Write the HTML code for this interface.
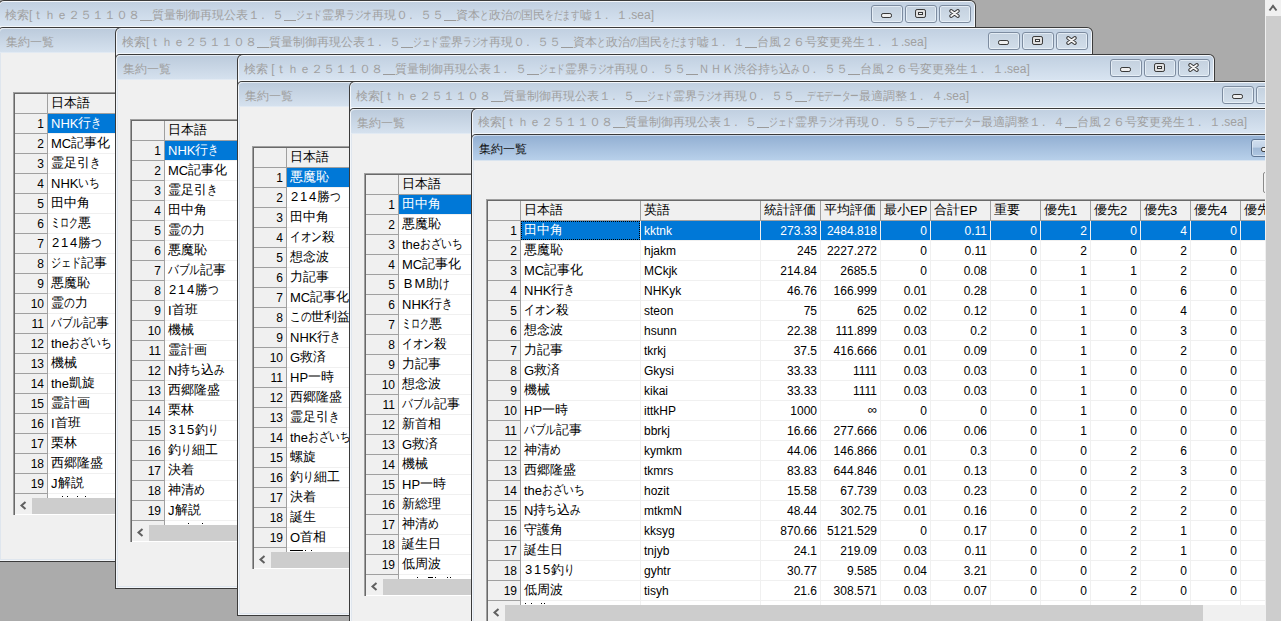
<!DOCTYPE html><html><head><meta charset="utf-8"><style>
*{margin:0;padding:0;box-sizing:border-box}
html,body{width:1281px;height:621px;overflow:hidden;background:#ababab;font-family:"Liberation Sans", sans-serif;}
.win{position:absolute;width:978px;height:562px;background:#3b3b3b;border-radius:6px 6px 0 0;overflow:hidden}
.w1{position:absolute;left:1px;top:1px;right:1px;bottom:1px;background:#f4f7fb;border-radius:5px 5px 0 0}
.w2{position:absolute;left:2px;top:2px;right:2px;bottom:2px;background:#dce4ee;border-radius:4px 4px 0 0}
.tb{position:absolute;left:2px;right:2px;top:2px;background:linear-gradient(#c1d0e1,#d8e4f1);border-radius:4px 4px 0 0}
.ttl{position:absolute;left:7px;font-size:12px;color:#a0a0a0;white-space:nowrap;line-height:14px}
.btn{position:absolute;width:32px;height:18px;border:1px solid #7d8ca0;border-radius:3px;background:linear-gradient(#c4d1df,#d2deea);box-shadow:inset 0 0 0 1px rgba(240,246,252,.7)}
.imin{position:absolute;left:9px;top:7px;width:11px;height:5px;background:linear-gradient(#fafafa,#dcdcdc);border:1px solid #3a3a3a;border-radius:2px}
.imax{position:absolute;left:9px;top:3px;width:11px;height:9px;background:#e4e4e4;border:1px solid #3a3a3a;border-radius:2px}
.imax:after{content:"";position:absolute;left:2px;top:2px;width:5px;height:3px;background:#f8f8f8;border:1px solid #3a3a3a}
.ic{position:absolute}
.tbl{position:absolute;left:2px;right:2px;height:1px;background:#f3f7fb}
.child{position:absolute;left:0;right:0;bottom:0;background:#3b3b3b;border-radius:5px 5px 0 0}
.c1{position:absolute;left:1px;right:1px;top:1px;bottom:1px;background:#f3f6fa;border-radius:4px 4px 0 0}
.c2{position:absolute;left:2px;right:2px;top:2px;bottom:2px;background:#dfe6ee}
.cap{position:absolute;left:2px;right:2px;top:1px;height:25px;background:linear-gradient(#bccbdc,#d5e1ee calc(100% - 1px),#e2eaf3 calc(100% - 1px));border-radius:4px 4px 0 0;border-top:1px solid #e4ebf3}
.cap.act{background:linear-gradient(#93b0d3,#b8d0ea calc(100% - 1px),#d9e4ef calc(100% - 1px));border-top:1px solid #c9d8ea}
.ctl{position:absolute;left:6px;top:6px;font-size:12px;color:#a0a0a0;line-height:14px;white-space:nowrap}
.cap.act .ctl{color:#111}
.k{display:inline-block;transform-origin:0 0}
.pd{display:inline-block;width:12px;padding-left:1px}
.m{font-size:13px;position:relative;top:-1px}
.fw{display:inline-block;text-align:center;font-size:13px;position:relative;top:-2px}
.j{font-size:13px;position:relative;top:-2px}
.u{display:inline-block;width:12px;height:1px;border-bottom:1px solid #9a9a9a;margin-left:0px;vertical-align:-2px}
.cont{position:absolute;left:3px;right:3px;top:26px;bottom:3px;background:#f0f0f0}
.grid{position:absolute;height:423px;background:#fff;overflow:hidden;font-size:12px;color:#000}
.gf1{position:absolute;left:0;top:0;right:0;height:1px;background:#a0a0a0}
.gf2{position:absolute;left:0;top:0;bottom:0;width:1px;background:#a0a0a0}
.gf3{position:absolute;left:1px;top:1px;right:0;height:1px;background:#696969}
.gf4{position:absolute;left:1px;top:1px;bottom:0;width:1px;background:#696969}
.hc{position:absolute;background:#f0f0f0;line-height:21px;white-space:nowrap;overflow:hidden;border-right:1px solid #a0a0a0;border-bottom:1px solid #a0a0a0}
.hc.t{padding-left:3px}
.rn{position:absolute;left:2px;width:33px;height:20px;background:#f0f0f0;line-height:21px;text-align:right;padding-right:3px;border-right:1px solid #a0a0a0;border-bottom:1px solid #a0a0a0}
.c{position:absolute;height:20px;line-height:21px;white-space:nowrap;overflow:hidden;padding-left:3px;border-right:1px solid #f0f0f0;border-bottom:1px solid #f0f0f0}
.c.r{text-align:right;padding-left:0;padding-right:3px}
.c.sel{background:#0078d7;color:#fff}
.c.foc:after{content:"";position:absolute;left:0;top:0;right:0;bottom:0;border:1px dotted #000}
.hsb{position:absolute;left:2px;top:406px;height:16px;background:#f0f0f0}
.arr{position:absolute;left:0;top:0;width:17px;height:16px}
.thumb{position:absolute;left:17px;top:0;height:16px;background:#cdcdcd}
.cbtn{position:absolute;width:32px;height:18px;border:1px solid #5f7694;border-radius:3px;background:linear-gradient(#d0deee 0,#c3d4e8 45%,#9fb8d5 50%,#b0c7e2 100%);box-shadow:inset 0 0 0 1px rgba(230,240,250,.6)}
.vsb{position:absolute;left:1265px;top:0;width:16px;height:621px;background:#f0f0f0}
.vth{position:absolute;left:1266px;top:16px;width:15px;height:605px;background:#cdcdcd}
.up{position:absolute;left:1265px;top:0px}
</style></head><body><div class="win" style="left:-2px;top:0px"><div class="w1"></div><div class="w2"></div><div class="tb" style="height:24px"></div><div class="tbl" style="top:26px"></div><div class="ttl" style="top:8px">検索[ｔｈｅ２５１１０８<span class="u"></span>質量制御再現公表１<span class="pd">.</span>５<span class="u"></span><span class="k" style="transform:scaleX(0.72);margin-right:-10.1px">ジェド</span>霊界<span class="k" style="transform:scaleX(0.72);margin-right:-10.1px">ラジオ</span>再現０<span class="pd">.</span>５５<span class="u"></span>資本<span class="k" style="transform:scaleX(0.72);margin-right:-3.4px">と</span>政治<span class="k" style="transform:scaleX(0.72);margin-right:-3.4px">の</span>国民<span class="k" style="transform:scaleX(0.72);margin-right:-13.4px">をだます</span>嘘１<span class="pd">.</span>１.sea]</div><div class="btn" style="left:873px;top:5px"><svg class="ic" style="left:9px;top:7px" width="11" height="5"><rect x="0.5" y="0.5" width="10" height="4" rx="1.6" fill="#efefef" stroke="#383838"/></svg></div><div class="btn" style="left:907px;top:5px"><svg class="ic" style="left:9px;top:3px" width="11" height="9"><rect x="0.5" y="0.5" width="10" height="8" rx="1.6" fill="#e0e0e0" stroke="#383838"/><rect x="3.5" y="3.5" width="4" height="2" fill="#f6f6f6" stroke="#383838"/></svg></div><div class="btn" style="left:941px;top:5px"><svg class="ic" style="left:9px;top:3px" width="11" height="9" viewBox="0 0 11 9"><path d="M2.2 2 L8.8 7 M8.8 2 L2.2 7" stroke="#383838" stroke-width="3.8" stroke-linecap="round"/><path d="M2.2 2 L8.8 7 M8.8 2 L2.2 7" stroke="#f2f2f2" stroke-width="1.9" stroke-linecap="round"/></svg></div><div class="child" style="top:27px"><div class="c1"></div><div class="c2"></div><div class="cap" style="height:25px"><div class="ctl">集約一覧</div></div><div class="cont" style="top:26px"></div></div><div class="grid" style="left:15px;top:92px;width:160px;"><div class="gf1"></div><div class="gf2"></div><div class="gf3"></div><div class="gf4"></div><div class="hc" style="left:2px;top:2px;width:33px;height:20px"></div><div class="hc t" style="left:35px;top:2px;width:120px;height:20px"><span class="j">日本語</span></div><div class="rn" style="top:22px">1</div><div class="c sel" style="left:35px;top:22px;width:120px"><span class="m">NHK</span><span class="j">行</span><span class="j k" style="transform:scaleX(0.82);margin-right:-2.3px">き</span></div><div class="rn" style="top:42px">2</div><div class="c" style="left:35px;top:42px;width:120px"><span class="m">MC</span><span class="j">記事化</span></div><div class="rn" style="top:62px">3</div><div class="c" style="left:35px;top:62px;width:120px"><span class="j">霊足引</span><span class="j k" style="transform:scaleX(0.82);margin-right:-2.3px">き</span></div><div class="rn" style="top:82px">4</div><div class="c" style="left:35px;top:82px;width:120px"><span class="m">NHK</span><span class="j k" style="transform:scaleX(0.82);margin-right:-4.7px">いち</span></div><div class="rn" style="top:102px">5</div><div class="c" style="left:35px;top:102px;width:120px"><span class="j">田中角</span></div><div class="rn" style="top:122px">6</div><div class="c" style="left:35px;top:122px;width:120px"><span class="j k" style="transform:scaleX(0.7);margin-right:-11.7px">ミロク</span><span class="j">悪</span></div><div class="rn" style="top:142px">7</div><div class="c" style="left:35px;top:142px;width:120px"><span class="fw" style="width:9px">2</span><span class="fw" style="width:9px">1</span><span class="fw" style="width:9px">4</span><span class="j">勝</span><span class="j k" style="transform:scaleX(0.82);margin-right:-2.3px">つ</span></div><div class="rn" style="top:162px">8</div><div class="c" style="left:35px;top:162px;width:120px"><span class="j k" style="transform:scaleX(0.78);margin-right:-8.6px">ジェド</span><span class="j">記事</span></div><div class="rn" style="top:182px">9</div><div class="c" style="left:35px;top:182px;width:120px"><span class="j">悪魔恥</span></div><div class="rn" style="top:202px">10</div><div class="c" style="left:35px;top:202px;width:120px"><span class="j">霊</span><span class="j k" style="transform:scaleX(0.82);margin-right:-2.3px">の</span><span class="j">力</span></div><div class="rn" style="top:222px">11</div><div class="c" style="left:35px;top:222px;width:120px"><span class="j k" style="transform:scaleX(0.82);margin-right:-7.0px">バブル</span><span class="j">記事</span></div><div class="rn" style="top:242px">12</div><div class="c" style="left:35px;top:242px;width:120px"><span class="m">the</span><span class="j k" style="transform:scaleX(0.82);margin-right:-9.4px">おざいち</span></div><div class="rn" style="top:262px">13</div><div class="c" style="left:35px;top:262px;width:120px"><span class="j">機械</span></div><div class="rn" style="top:282px">14</div><div class="c" style="left:35px;top:282px;width:120px"><span class="m">the</span><span class="j">凱旋</span></div><div class="rn" style="top:302px">15</div><div class="c" style="left:35px;top:302px;width:120px"><span class="j">霊計画</span></div><div class="rn" style="top:322px">16</div><div class="c" style="left:35px;top:322px;width:120px"><span class="m">I</span><span class="j">首班</span></div><div class="rn" style="top:342px">17</div><div class="c" style="left:35px;top:342px;width:120px"><span class="j">栗林</span></div><div class="rn" style="top:362px">18</div><div class="c" style="left:35px;top:362px;width:120px"><span class="j">西郷隆盛</span></div><div class="rn" style="top:382px">19</div><div class="c" style="left:35px;top:382px;width:120px"><span class="m">J</span><span class="j">解説</span></div><div class="rn" style="top:402px">20</div><div class="c" style="left:35px;top:402px;width:120px"></div><div style="position:absolute;left:49px;top:404px;width:1px;height:1px;background:#000"></div><div style="position:absolute;left:54px;top:404px;width:1px;height:1px;background:#000"></div><div style="position:absolute;left:64px;top:404px;width:1px;height:1px;background:#000"></div><div style="position:absolute;left:72px;top:404px;width:1px;height:1px;background:#000"></div><div class="hsb" style="width:156px"><svg class="arr" width="17" height="16"><path d="M10.5 4 L6.5 7.5 L10.5 11" fill="none" stroke="#606060" stroke-width="2"/></svg><div class="thumb" style="width:139px"></div></div></div></div><div class="win" style="left:115px;top:27px"><div class="w1"></div><div class="w2"></div><div class="tb" style="height:24px"></div><div class="tbl" style="top:26px"></div><div class="ttl" style="top:8px">検索[ｔｈｅ２５１１０８<span class="u"></span>質量制御再現公表１<span class="pd">.</span>５<span class="u"></span><span class="k" style="transform:scaleX(0.72);margin-right:-10.1px">ジェド</span>霊界<span class="k" style="transform:scaleX(0.72);margin-right:-10.1px">ラジオ</span>再現０<span class="pd">.</span>５５<span class="u"></span>資本<span class="k" style="transform:scaleX(0.72);margin-right:-3.4px">と</span>政治<span class="k" style="transform:scaleX(0.72);margin-right:-3.4px">の</span>国民<span class="k" style="transform:scaleX(0.72);margin-right:-13.4px">をだます</span>嘘１<span class="pd">.</span>１<span class="u"></span>台風２６号変更発生１<span class="pd">.</span>１.sea]</div><div class="btn" style="left:873px;top:5px"><svg class="ic" style="left:9px;top:7px" width="11" height="5"><rect x="0.5" y="0.5" width="10" height="4" rx="1.6" fill="#efefef" stroke="#383838"/></svg></div><div class="btn" style="left:907px;top:5px"><svg class="ic" style="left:9px;top:3px" width="11" height="9"><rect x="0.5" y="0.5" width="10" height="8" rx="1.6" fill="#e0e0e0" stroke="#383838"/><rect x="3.5" y="3.5" width="4" height="2" fill="#f6f6f6" stroke="#383838"/></svg></div><div class="btn" style="left:941px;top:5px"><svg class="ic" style="left:9px;top:3px" width="11" height="9" viewBox="0 0 11 9"><path d="M2.2 2 L8.8 7 M8.8 2 L2.2 7" stroke="#383838" stroke-width="3.8" stroke-linecap="round"/><path d="M2.2 2 L8.8 7 M8.8 2 L2.2 7" stroke="#f2f2f2" stroke-width="1.9" stroke-linecap="round"/></svg></div><div class="child" style="top:27px"><div class="c1"></div><div class="c2"></div><div class="cap" style="height:25px"><div class="ctl">集約一覧</div></div><div class="cont" style="top:26px"></div></div><div class="grid" style="left:15px;top:92px;width:160px;"><div class="gf1"></div><div class="gf2"></div><div class="gf3"></div><div class="gf4"></div><div class="hc" style="left:2px;top:2px;width:33px;height:20px"></div><div class="hc t" style="left:35px;top:2px;width:120px;height:20px"><span class="j">日本語</span></div><div class="rn" style="top:22px">1</div><div class="c sel" style="left:35px;top:22px;width:120px"><span class="m">NHK</span><span class="j">行</span><span class="j k" style="transform:scaleX(0.82);margin-right:-2.3px">き</span></div><div class="rn" style="top:42px">2</div><div class="c" style="left:35px;top:42px;width:120px"><span class="m">MC</span><span class="j">記事化</span></div><div class="rn" style="top:62px">3</div><div class="c" style="left:35px;top:62px;width:120px"><span class="j">霊足引</span><span class="j k" style="transform:scaleX(0.82);margin-right:-2.3px">き</span></div><div class="rn" style="top:82px">4</div><div class="c" style="left:35px;top:82px;width:120px"><span class="j">田中角</span></div><div class="rn" style="top:102px">5</div><div class="c" style="left:35px;top:102px;width:120px"><span class="j">霊</span><span class="j k" style="transform:scaleX(0.82);margin-right:-2.3px">の</span><span class="j">力</span></div><div class="rn" style="top:122px">6</div><div class="c" style="left:35px;top:122px;width:120px"><span class="j">悪魔恥</span></div><div class="rn" style="top:142px">7</div><div class="c" style="left:35px;top:142px;width:120px"><span class="j k" style="transform:scaleX(0.82);margin-right:-7.0px">バブル</span><span class="j">記事</span></div><div class="rn" style="top:162px">8</div><div class="c" style="left:35px;top:162px;width:120px"><span class="fw" style="width:9px">2</span><span class="fw" style="width:9px">1</span><span class="fw" style="width:9px">4</span><span class="j">勝</span><span class="j k" style="transform:scaleX(0.82);margin-right:-2.3px">つ</span></div><div class="rn" style="top:182px">9</div><div class="c" style="left:35px;top:182px;width:120px"><span class="m">I</span><span class="j">首班</span></div><div class="rn" style="top:202px">10</div><div class="c" style="left:35px;top:202px;width:120px"><span class="j">機械</span></div><div class="rn" style="top:222px">11</div><div class="c" style="left:35px;top:222px;width:120px"><span class="j">霊計画</span></div><div class="rn" style="top:242px">12</div><div class="c" style="left:35px;top:242px;width:120px"><span class="m">N</span><span class="j">持</span><span class="j k" style="transform:scaleX(0.82);margin-right:-2.3px">ち</span><span class="j">込</span><span class="j k" style="transform:scaleX(0.82);margin-right:-2.3px">み</span></div><div class="rn" style="top:262px">13</div><div class="c" style="left:35px;top:262px;width:120px"><span class="j">西郷隆盛</span></div><div class="rn" style="top:282px">14</div><div class="c" style="left:35px;top:282px;width:120px"><span class="j">栗林</span></div><div class="rn" style="top:302px">15</div><div class="c" style="left:35px;top:302px;width:120px"><span class="fw" style="width:9px">3</span><span class="fw" style="width:9px">1</span><span class="fw" style="width:9px">5</span><span class="j">釣</span><span class="j k" style="transform:scaleX(0.82);margin-right:-2.3px">り</span></div><div class="rn" style="top:322px">16</div><div class="c" style="left:35px;top:322px;width:120px"><span class="j">釣</span><span class="j k" style="transform:scaleX(0.82);margin-right:-2.3px">り</span><span class="j">細工</span></div><div class="rn" style="top:342px">17</div><div class="c" style="left:35px;top:342px;width:120px"><span class="j">決着</span></div><div class="rn" style="top:362px">18</div><div class="c" style="left:35px;top:362px;width:120px"><span class="j">神清</span><span class="j k" style="transform:scaleX(0.82);margin-right:-2.3px">め</span></div><div class="rn" style="top:382px">19</div><div class="c" style="left:35px;top:382px;width:120px"><span class="m">J</span><span class="j">解説</span></div><div class="rn" style="top:402px">20</div><div class="c" style="left:35px;top:402px;width:120px"></div><div style="position:absolute;left:58px;top:404px;width:1px;height:1px;background:#000"></div><div style="position:absolute;left:72px;top:404px;width:1px;height:1px;background:#000"></div><div class="hsb" style="width:156px"><svg class="arr" width="17" height="16"><path d="M10.5 4 L6.5 7.5 L10.5 11" fill="none" stroke="#606060" stroke-width="2"/></svg><div class="thumb" style="width:139px"></div></div></div></div><div class="win" style="left:237px;top:54px"><div class="w1"></div><div class="w2"></div><div class="tb" style="height:24px"></div><div class="tbl" style="top:26px"></div><div class="ttl" style="top:8px">検索 [ｔｈｅ２５１１０８<span class="u"></span>質量制御再現公表１<span class="pd">.</span>５<span class="u"></span><span class="k" style="transform:scaleX(0.72);margin-right:-10.1px">ジェド</span>霊界<span class="k" style="transform:scaleX(0.72);margin-right:-10.1px">ラジオ</span>再現０<span class="pd">.</span>５５<span class="u"></span>ＮＨＫ渋谷持<span class="k" style="transform:scaleX(0.72);margin-right:-3.4px">ち</span>込<span class="k" style="transform:scaleX(0.72);margin-right:-3.4px">み</span>０<span class="pd">.</span>５５<span class="u"></span>台風２６号変更発生１<span class="pd">.</span>１.sea]</div><div class="btn" style="left:873px;top:5px"><svg class="ic" style="left:9px;top:7px" width="11" height="5"><rect x="0.5" y="0.5" width="10" height="4" rx="1.6" fill="#efefef" stroke="#383838"/></svg></div><div class="btn" style="left:907px;top:5px"><svg class="ic" style="left:9px;top:3px" width="11" height="9"><rect x="0.5" y="0.5" width="10" height="8" rx="1.6" fill="#e0e0e0" stroke="#383838"/><rect x="3.5" y="3.5" width="4" height="2" fill="#f6f6f6" stroke="#383838"/></svg></div><div class="btn" style="left:941px;top:5px"><svg class="ic" style="left:9px;top:3px" width="11" height="9" viewBox="0 0 11 9"><path d="M2.2 2 L8.8 7 M8.8 2 L2.2 7" stroke="#383838" stroke-width="3.8" stroke-linecap="round"/><path d="M2.2 2 L8.8 7 M8.8 2 L2.2 7" stroke="#f2f2f2" stroke-width="1.9" stroke-linecap="round"/></svg></div><div class="child" style="top:27px"><div class="c1"></div><div class="c2"></div><div class="cap" style="height:25px"><div class="ctl">集約一覧</div></div><div class="cont" style="top:26px"></div></div><div class="grid" style="left:15px;top:92px;width:160px;"><div class="gf1"></div><div class="gf2"></div><div class="gf3"></div><div class="gf4"></div><div class="hc" style="left:2px;top:2px;width:33px;height:20px"></div><div class="hc t" style="left:35px;top:2px;width:120px;height:20px"><span class="j">日本語</span></div><div class="rn" style="top:22px">1</div><div class="c sel" style="left:35px;top:22px;width:120px"><span class="j">悪魔恥</span></div><div class="rn" style="top:42px">2</div><div class="c" style="left:35px;top:42px;width:120px"><span class="fw" style="width:9px">2</span><span class="fw" style="width:9px">1</span><span class="fw" style="width:9px">4</span><span class="j">勝</span><span class="j k" style="transform:scaleX(0.82);margin-right:-2.3px">つ</span></div><div class="rn" style="top:62px">3</div><div class="c" style="left:35px;top:62px;width:120px"><span class="j">田中角</span></div><div class="rn" style="top:82px">4</div><div class="c" style="left:35px;top:82px;width:120px"><span class="j k" style="transform:scaleX(0.82);margin-right:-7.0px">イオン</span><span class="j">殺</span></div><div class="rn" style="top:102px">5</div><div class="c" style="left:35px;top:102px;width:120px"><span class="j">想念波</span></div><div class="rn" style="top:122px">6</div><div class="c" style="left:35px;top:122px;width:120px"><span class="j">力記事</span></div><div class="rn" style="top:142px">7</div><div class="c" style="left:35px;top:142px;width:120px"><span class="m">MC</span><span class="j">記事化</span></div><div class="rn" style="top:162px">8</div><div class="c" style="left:35px;top:162px;width:120px"><span class="j k" style="transform:scaleX(0.82);margin-right:-4.7px">この</span><span class="j">世利益</span></div><div class="rn" style="top:182px">9</div><div class="c" style="left:35px;top:182px;width:120px"><span class="m">NHK</span><span class="j">行</span><span class="j k" style="transform:scaleX(0.82);margin-right:-2.3px">き</span></div><div class="rn" style="top:202px">10</div><div class="c" style="left:35px;top:202px;width:120px"><span class="m">G</span><span class="j">救済</span></div><div class="rn" style="top:222px">11</div><div class="c" style="left:35px;top:222px;width:120px"><span class="m">HP</span><span class="j">一時</span></div><div class="rn" style="top:242px">12</div><div class="c" style="left:35px;top:242px;width:120px"><span class="j">西郷隆盛</span></div><div class="rn" style="top:262px">13</div><div class="c" style="left:35px;top:262px;width:120px"><span class="j">霊足引</span><span class="j k" style="transform:scaleX(0.82);margin-right:-2.3px">き</span></div><div class="rn" style="top:282px">14</div><div class="c" style="left:35px;top:282px;width:120px"><span class="m">the</span><span class="j k" style="transform:scaleX(0.82);margin-right:-9.4px">おざいち</span></div><div class="rn" style="top:302px">15</div><div class="c" style="left:35px;top:302px;width:120px"><span class="j">螺旋</span></div><div class="rn" style="top:322px">16</div><div class="c" style="left:35px;top:322px;width:120px"><span class="j">釣</span><span class="j k" style="transform:scaleX(0.82);margin-right:-2.3px">り</span><span class="j">細工</span></div><div class="rn" style="top:342px">17</div><div class="c" style="left:35px;top:342px;width:120px"><span class="j">決着</span></div><div class="rn" style="top:362px">18</div><div class="c" style="left:35px;top:362px;width:120px"><span class="j">誕生</span></div><div class="rn" style="top:382px">19</div><div class="c" style="left:35px;top:382px;width:120px"><span class="m">O</span><span class="j">首相</span></div><div class="rn" style="top:402px">20</div><div class="c" style="left:35px;top:402px;width:120px"></div><div style="position:absolute;left:38px;top:404px;width:13px;height:1px;background:#000"></div><div style="position:absolute;left:53px;top:404px;width:1px;height:1px;background:#000"></div><div style="position:absolute;left:59px;top:404px;width:1px;height:1px;background:#000"></div><div class="hsb" style="width:156px"><svg class="arr" width="17" height="16"><path d="M10.5 4 L6.5 7.5 L10.5 11" fill="none" stroke="#606060" stroke-width="2"/></svg><div class="thumb" style="width:139px"></div></div></div></div><div class="win" style="left:349px;top:81px"><div class="w1"></div><div class="w2"></div><div class="tb" style="height:24px"></div><div class="tbl" style="top:26px"></div><div class="ttl" style="top:8px">検索[ｔｈｅ２５１１０８<span class="u"></span>質量制御再現公表１<span class="pd">.</span>５<span class="u"></span><span class="k" style="transform:scaleX(0.72);margin-right:-10.1px">ジェド</span>霊界<span class="k" style="transform:scaleX(0.72);margin-right:-10.1px">ラジオ</span>再現０<span class="pd">.</span>５５<span class="u"></span><span class="k" style="transform:scaleX(0.72);margin-right:-20.2px">デモデーター</span>最適調整１<span class="pd">.</span>４.sea]</div><div class="btn" style="left:873px;top:5px"><svg class="ic" style="left:9px;top:7px" width="11" height="5"><rect x="0.5" y="0.5" width="10" height="4" rx="1.6" fill="#efefef" stroke="#383838"/></svg></div><div class="btn" style="left:907px;top:5px"><svg class="ic" style="left:9px;top:3px" width="11" height="9"><rect x="0.5" y="0.5" width="10" height="8" rx="1.6" fill="#e0e0e0" stroke="#383838"/><rect x="3.5" y="3.5" width="4" height="2" fill="#f6f6f6" stroke="#383838"/></svg></div><div class="btn" style="left:941px;top:5px"><svg class="ic" style="left:9px;top:3px" width="11" height="9" viewBox="0 0 11 9"><path d="M2.2 2 L8.8 7 M8.8 2 L2.2 7" stroke="#383838" stroke-width="3.8" stroke-linecap="round"/><path d="M2.2 2 L8.8 7 M8.8 2 L2.2 7" stroke="#f2f2f2" stroke-width="1.9" stroke-linecap="round"/></svg></div><div class="child" style="top:27px"><div class="c1"></div><div class="c2"></div><div class="cap" style="height:25px"><div class="ctl">集約一覧</div></div><div class="cont" style="top:26px"></div></div><div class="grid" style="left:15px;top:92px;width:160px;"><div class="gf1"></div><div class="gf2"></div><div class="gf3"></div><div class="gf4"></div><div class="hc" style="left:2px;top:2px;width:33px;height:20px"></div><div class="hc t" style="left:35px;top:2px;width:120px;height:20px"><span class="j">日本語</span></div><div class="rn" style="top:22px">1</div><div class="c sel" style="left:35px;top:22px;width:120px"><span class="j">田中角</span></div><div class="rn" style="top:42px">2</div><div class="c" style="left:35px;top:42px;width:120px"><span class="j">悪魔恥</span></div><div class="rn" style="top:62px">3</div><div class="c" style="left:35px;top:62px;width:120px"><span class="m">the</span><span class="j k" style="transform:scaleX(0.82);margin-right:-9.4px">おざいち</span></div><div class="rn" style="top:82px">4</div><div class="c" style="left:35px;top:82px;width:120px"><span class="m">MC</span><span class="j">記事化</span></div><div class="rn" style="top:102px">5</div><div class="c" style="left:35px;top:102px;width:120px"><span class="fw" style="width:12px">B</span><span class="fw" style="width:12px">M</span><span class="j">助</span><span class="j k" style="transform:scaleX(0.82);margin-right:-2.3px">け</span></div><div class="rn" style="top:122px">6</div><div class="c" style="left:35px;top:122px;width:120px"><span class="m">NHK</span><span class="j">行</span><span class="j k" style="transform:scaleX(0.82);margin-right:-2.3px">き</span></div><div class="rn" style="top:142px">7</div><div class="c" style="left:35px;top:142px;width:120px"><span class="j k" style="transform:scaleX(0.7);margin-right:-11.7px">ミロク</span><span class="j">悪</span></div><div class="rn" style="top:162px">8</div><div class="c" style="left:35px;top:162px;width:120px"><span class="j k" style="transform:scaleX(0.82);margin-right:-7.0px">イオン</span><span class="j">殺</span></div><div class="rn" style="top:182px">9</div><div class="c" style="left:35px;top:182px;width:120px"><span class="j">力記事</span></div><div class="rn" style="top:202px">10</div><div class="c" style="left:35px;top:202px;width:120px"><span class="j">想念波</span></div><div class="rn" style="top:222px">11</div><div class="c" style="left:35px;top:222px;width:120px"><span class="j k" style="transform:scaleX(0.82);margin-right:-7.0px">バブル</span><span class="j">記事</span></div><div class="rn" style="top:242px">12</div><div class="c" style="left:35px;top:242px;width:120px"><span class="j">新首相</span></div><div class="rn" style="top:262px">13</div><div class="c" style="left:35px;top:262px;width:120px"><span class="m">G</span><span class="j">救済</span></div><div class="rn" style="top:282px">14</div><div class="c" style="left:35px;top:282px;width:120px"><span class="j">機械</span></div><div class="rn" style="top:302px">15</div><div class="c" style="left:35px;top:302px;width:120px"><span class="m">HP</span><span class="j">一時</span></div><div class="rn" style="top:322px">16</div><div class="c" style="left:35px;top:322px;width:120px"><span class="j">新総理</span></div><div class="rn" style="top:342px">17</div><div class="c" style="left:35px;top:342px;width:120px"><span class="j">神清</span><span class="j k" style="transform:scaleX(0.82);margin-right:-2.3px">め</span></div><div class="rn" style="top:362px">18</div><div class="c" style="left:35px;top:362px;width:120px"><span class="j">誕生日</span></div><div class="rn" style="top:382px">19</div><div class="c" style="left:35px;top:382px;width:120px"><span class="j">低周波</span></div><div class="rn" style="top:402px">20</div><div class="c" style="left:35px;top:402px;width:120px"></div><div style="position:absolute;left:53px;top:404px;width:1px;height:1px;background:#000"></div><div style="position:absolute;left:64px;top:404px;width:5px;height:1px;background:#000"></div><div style="position:absolute;left:71px;top:404px;width:1px;height:1px;background:#000"></div><div style="position:absolute;left:83px;top:404px;width:1px;height:1px;background:#000"></div><div style="position:absolute;left:86px;top:404px;width:1px;height:1px;background:#000"></div><div class="hsb" style="width:156px"><svg class="arr" width="17" height="16"><path d="M10.5 4 L6.5 7.5 L10.5 11" fill="none" stroke="#606060" stroke-width="2"/></svg><div class="thumb" style="width:139px"></div></div></div></div><div class="win" style="left:471px;top:108px"><div class="w1"></div><div class="w2"></div><div class="tb" style="height:23px"></div><div class="tbl" style="top:25px"></div><div class="ttl" style="top:7px">検索[ｔｈｅ２５１１０８<span class="u"></span>質量制御再現公表１<span class="pd">.</span>５<span class="u"></span><span class="k" style="transform:scaleX(0.72);margin-right:-10.1px">ジェド</span>霊界<span class="k" style="transform:scaleX(0.72);margin-right:-10.1px">ラジオ</span>再現０<span class="pd">.</span>５５<span class="u"></span><span class="k" style="transform:scaleX(0.72);margin-right:-20.2px">デモデーター</span>最適調整１<span class="pd">.</span>４<span class="u"></span>台風２６号変更発生１<span class="pd">.</span>１.sea]</div><div class="btn" style="left:873px;top:5px"><svg class="ic" style="left:9px;top:7px" width="11" height="5"><rect x="0.5" y="0.5" width="10" height="4" rx="1.6" fill="#efefef" stroke="#383838"/></svg></div><div class="btn" style="left:907px;top:5px"><svg class="ic" style="left:9px;top:3px" width="11" height="9"><rect x="0.5" y="0.5" width="10" height="8" rx="1.6" fill="#e0e0e0" stroke="#383838"/><rect x="3.5" y="3.5" width="4" height="2" fill="#f6f6f6" stroke="#383838"/></svg></div><div class="btn" style="left:941px;top:5px"><svg class="ic" style="left:9px;top:3px" width="11" height="9" viewBox="0 0 11 9"><path d="M2.2 2 L8.8 7 M8.8 2 L2.2 7" stroke="#383838" stroke-width="3.8" stroke-linecap="round"/><path d="M2.2 2 L8.8 7 M8.8 2 L2.2 7" stroke="#f2f2f2" stroke-width="1.9" stroke-linecap="round"/></svg></div><div class="child" style="top:26px"><div class="c1"></div><div class="c2"></div><div class="cap act" style="height:26px"><div class="ctl">集約一覧</div></div><div class="cont" style="top:27px"></div></div></div><div class="grid" style="left:486px;top:199px;width:800px;"><div class="gf1"></div><div class="gf2"></div><div class="gf3"></div><div class="gf4"></div><div class="hc" style="left:2px;top:2px;width:33px;height:20px"></div><div class="hc t" style="left:35px;top:2px;width:120px;height:20px"><span class="j">日本語</span></div><div class="hc t" style="left:155px;top:2px;width:120px;height:20px"><span class="j">英語</span></div><div class="hc t" style="left:275px;top:2px;width:60px;height:20px"><span class="j">統計評価</span></div><div class="hc t" style="left:335px;top:2px;width:60px;height:20px"><span class="j">平均評価</span></div><div class="hc t" style="left:395px;top:2px;width:50px;height:20px"><span class="j">最小</span><span class="m">EP</span></div><div class="hc t" style="left:445px;top:2px;width:60px;height:20px"><span class="j">合計</span><span class="m">EP</span></div><div class="hc t" style="left:505px;top:2px;width:50px;height:20px"><span class="j">重要</span></div><div class="hc t" style="left:555px;top:2px;width:50px;height:20px"><span class="j">優先</span><span class="m">1</span></div><div class="hc t" style="left:605px;top:2px;width:50px;height:20px"><span class="j">優先</span><span class="m">2</span></div><div class="hc t" style="left:655px;top:2px;width:50px;height:20px"><span class="j">優先</span><span class="m">3</span></div><div class="hc t" style="left:705px;top:2px;width:50px;height:20px"><span class="j">優先</span><span class="m">4</span></div><div class="hc t" style="left:755px;top:2px;width:50px;height:20px"><span class="j">優先</span><span class="m">5</span></div><div class="rn" style="top:22px">1</div><div class="c sel foc" style="left:35px;top:22px;width:120px"><span class="j">田中角</span></div><div class="c sel" style="left:155px;top:22px;width:120px">kktnk</div><div class="c sel r" style="left:275px;top:22px;width:60px">273.33</div><div class="c sel r" style="left:335px;top:22px;width:60px">2484.818</div><div class="c sel r" style="left:395px;top:22px;width:50px">0</div><div class="c sel r" style="left:445px;top:22px;width:60px">0.11</div><div class="c sel r" style="left:505px;top:22px;width:50px">0</div><div class="c sel r" style="left:555px;top:22px;width:50px">2</div><div class="c sel r" style="left:605px;top:22px;width:50px">0</div><div class="c sel r" style="left:655px;top:22px;width:50px">4</div><div class="c sel r" style="left:705px;top:22px;width:50px">0</div><div class="c sel r" style="left:755px;top:22px;width:50px"></div><div class="rn" style="top:42px">2</div><div class="c" style="left:35px;top:42px;width:120px"><span class="j">悪魔恥</span></div><div class="c" style="left:155px;top:42px;width:120px">hjakm</div><div class="c r" style="left:275px;top:42px;width:60px">245</div><div class="c r" style="left:335px;top:42px;width:60px">2227.272</div><div class="c r" style="left:395px;top:42px;width:50px">0</div><div class="c r" style="left:445px;top:42px;width:60px">0.11</div><div class="c r" style="left:505px;top:42px;width:50px">0</div><div class="c r" style="left:555px;top:42px;width:50px">2</div><div class="c r" style="left:605px;top:42px;width:50px">0</div><div class="c r" style="left:655px;top:42px;width:50px">2</div><div class="c r" style="left:705px;top:42px;width:50px">0</div><div class="c r" style="left:755px;top:42px;width:50px"></div><div class="rn" style="top:62px">3</div><div class="c" style="left:35px;top:62px;width:120px"><span class="m">MC</span><span class="j">記事化</span></div><div class="c" style="left:155px;top:62px;width:120px">MCkjk</div><div class="c r" style="left:275px;top:62px;width:60px">214.84</div><div class="c r" style="left:335px;top:62px;width:60px">2685.5</div><div class="c r" style="left:395px;top:62px;width:50px">0</div><div class="c r" style="left:445px;top:62px;width:60px">0.08</div><div class="c r" style="left:505px;top:62px;width:50px">0</div><div class="c r" style="left:555px;top:62px;width:50px">1</div><div class="c r" style="left:605px;top:62px;width:50px">1</div><div class="c r" style="left:655px;top:62px;width:50px">2</div><div class="c r" style="left:705px;top:62px;width:50px">0</div><div class="c r" style="left:755px;top:62px;width:50px"></div><div class="rn" style="top:82px">4</div><div class="c" style="left:35px;top:82px;width:120px"><span class="m">NHK</span><span class="j">行</span><span class="j k" style="transform:scaleX(0.82);margin-right:-2.3px">き</span></div><div class="c" style="left:155px;top:82px;width:120px">NHKyk</div><div class="c r" style="left:275px;top:82px;width:60px">46.76</div><div class="c r" style="left:335px;top:82px;width:60px">166.999</div><div class="c r" style="left:395px;top:82px;width:50px">0.01</div><div class="c r" style="left:445px;top:82px;width:60px">0.28</div><div class="c r" style="left:505px;top:82px;width:50px">0</div><div class="c r" style="left:555px;top:82px;width:50px">1</div><div class="c r" style="left:605px;top:82px;width:50px">0</div><div class="c r" style="left:655px;top:82px;width:50px">6</div><div class="c r" style="left:705px;top:82px;width:50px">0</div><div class="c r" style="left:755px;top:82px;width:50px"></div><div class="rn" style="top:102px">5</div><div class="c" style="left:35px;top:102px;width:120px"><span class="j k" style="transform:scaleX(0.82);margin-right:-7.0px">イオン</span><span class="j">殺</span></div><div class="c" style="left:155px;top:102px;width:120px">steon</div><div class="c r" style="left:275px;top:102px;width:60px">75</div><div class="c r" style="left:335px;top:102px;width:60px">625</div><div class="c r" style="left:395px;top:102px;width:50px">0.02</div><div class="c r" style="left:445px;top:102px;width:60px">0.12</div><div class="c r" style="left:505px;top:102px;width:50px">0</div><div class="c r" style="left:555px;top:102px;width:50px">1</div><div class="c r" style="left:605px;top:102px;width:50px">0</div><div class="c r" style="left:655px;top:102px;width:50px">4</div><div class="c r" style="left:705px;top:102px;width:50px">0</div><div class="c r" style="left:755px;top:102px;width:50px"></div><div class="rn" style="top:122px">6</div><div class="c" style="left:35px;top:122px;width:120px"><span class="j">想念波</span></div><div class="c" style="left:155px;top:122px;width:120px">hsunn</div><div class="c r" style="left:275px;top:122px;width:60px">22.38</div><div class="c r" style="left:335px;top:122px;width:60px">111.899</div><div class="c r" style="left:395px;top:122px;width:50px">0.03</div><div class="c r" style="left:445px;top:122px;width:60px">0.2</div><div class="c r" style="left:505px;top:122px;width:50px">0</div><div class="c r" style="left:555px;top:122px;width:50px">1</div><div class="c r" style="left:605px;top:122px;width:50px">0</div><div class="c r" style="left:655px;top:122px;width:50px">3</div><div class="c r" style="left:705px;top:122px;width:50px">0</div><div class="c r" style="left:755px;top:122px;width:50px"></div><div class="rn" style="top:142px">7</div><div class="c" style="left:35px;top:142px;width:120px"><span class="j">力記事</span></div><div class="c" style="left:155px;top:142px;width:120px">tkrkj</div><div class="c r" style="left:275px;top:142px;width:60px">37.5</div><div class="c r" style="left:335px;top:142px;width:60px">416.666</div><div class="c r" style="left:395px;top:142px;width:50px">0.01</div><div class="c r" style="left:445px;top:142px;width:60px">0.09</div><div class="c r" style="left:505px;top:142px;width:50px">0</div><div class="c r" style="left:555px;top:142px;width:50px">1</div><div class="c r" style="left:605px;top:142px;width:50px">0</div><div class="c r" style="left:655px;top:142px;width:50px">2</div><div class="c r" style="left:705px;top:142px;width:50px">0</div><div class="c r" style="left:755px;top:142px;width:50px"></div><div class="rn" style="top:162px">8</div><div class="c" style="left:35px;top:162px;width:120px"><span class="m">G</span><span class="j">救済</span></div><div class="c" style="left:155px;top:162px;width:120px">Gkysi</div><div class="c r" style="left:275px;top:162px;width:60px">33.33</div><div class="c r" style="left:335px;top:162px;width:60px">1111</div><div class="c r" style="left:395px;top:162px;width:50px">0.03</div><div class="c r" style="left:445px;top:162px;width:60px">0.03</div><div class="c r" style="left:505px;top:162px;width:50px">0</div><div class="c r" style="left:555px;top:162px;width:50px">1</div><div class="c r" style="left:605px;top:162px;width:50px">0</div><div class="c r" style="left:655px;top:162px;width:50px">0</div><div class="c r" style="left:705px;top:162px;width:50px">0</div><div class="c r" style="left:755px;top:162px;width:50px"></div><div class="rn" style="top:182px">9</div><div class="c" style="left:35px;top:182px;width:120px"><span class="j">機械</span></div><div class="c" style="left:155px;top:182px;width:120px">kikai</div><div class="c r" style="left:275px;top:182px;width:60px">33.33</div><div class="c r" style="left:335px;top:182px;width:60px">1111</div><div class="c r" style="left:395px;top:182px;width:50px">0.03</div><div class="c r" style="left:445px;top:182px;width:60px">0.03</div><div class="c r" style="left:505px;top:182px;width:50px">0</div><div class="c r" style="left:555px;top:182px;width:50px">1</div><div class="c r" style="left:605px;top:182px;width:50px">0</div><div class="c r" style="left:655px;top:182px;width:50px">0</div><div class="c r" style="left:705px;top:182px;width:50px">0</div><div class="c r" style="left:755px;top:182px;width:50px"></div><div class="rn" style="top:202px">10</div><div class="c" style="left:35px;top:202px;width:120px"><span class="m">HP</span><span class="j">一時</span></div><div class="c" style="left:155px;top:202px;width:120px">ittkHP</div><div class="c r" style="left:275px;top:202px;width:60px">1000</div><div class="c r" style="left:335px;top:202px;width:60px"><span class="j">∞</span></div><div class="c r" style="left:395px;top:202px;width:50px">0</div><div class="c r" style="left:445px;top:202px;width:60px">0</div><div class="c r" style="left:505px;top:202px;width:50px">0</div><div class="c r" style="left:555px;top:202px;width:50px">1</div><div class="c r" style="left:605px;top:202px;width:50px">0</div><div class="c r" style="left:655px;top:202px;width:50px">0</div><div class="c r" style="left:705px;top:202px;width:50px">0</div><div class="c r" style="left:755px;top:202px;width:50px"></div><div class="rn" style="top:222px">11</div><div class="c" style="left:35px;top:222px;width:120px"><span class="j k" style="transform:scaleX(0.82);margin-right:-7.0px">バブル</span><span class="j">記事</span></div><div class="c" style="left:155px;top:222px;width:120px">bbrkj</div><div class="c r" style="left:275px;top:222px;width:60px">16.66</div><div class="c r" style="left:335px;top:222px;width:60px">277.666</div><div class="c r" style="left:395px;top:222px;width:50px">0.06</div><div class="c r" style="left:445px;top:222px;width:60px">0.06</div><div class="c r" style="left:505px;top:222px;width:50px">0</div><div class="c r" style="left:555px;top:222px;width:50px">1</div><div class="c r" style="left:605px;top:222px;width:50px">0</div><div class="c r" style="left:655px;top:222px;width:50px">0</div><div class="c r" style="left:705px;top:222px;width:50px">0</div><div class="c r" style="left:755px;top:222px;width:50px"></div><div class="rn" style="top:242px">12</div><div class="c" style="left:35px;top:242px;width:120px"><span class="j">神清</span><span class="j k" style="transform:scaleX(0.82);margin-right:-2.3px">め</span></div><div class="c" style="left:155px;top:242px;width:120px">kymkm</div><div class="c r" style="left:275px;top:242px;width:60px">44.06</div><div class="c r" style="left:335px;top:242px;width:60px">146.866</div><div class="c r" style="left:395px;top:242px;width:50px">0.01</div><div class="c r" style="left:445px;top:242px;width:60px">0.3</div><div class="c r" style="left:505px;top:242px;width:50px">0</div><div class="c r" style="left:555px;top:242px;width:50px">0</div><div class="c r" style="left:605px;top:242px;width:50px">2</div><div class="c r" style="left:655px;top:242px;width:50px">6</div><div class="c r" style="left:705px;top:242px;width:50px">0</div><div class="c r" style="left:755px;top:242px;width:50px"></div><div class="rn" style="top:262px">13</div><div class="c" style="left:35px;top:262px;width:120px"><span class="j">西郷隆盛</span></div><div class="c" style="left:155px;top:262px;width:120px">tkmrs</div><div class="c r" style="left:275px;top:262px;width:60px">83.83</div><div class="c r" style="left:335px;top:262px;width:60px">644.846</div><div class="c r" style="left:395px;top:262px;width:50px">0.01</div><div class="c r" style="left:445px;top:262px;width:60px">0.13</div><div class="c r" style="left:505px;top:262px;width:50px">0</div><div class="c r" style="left:555px;top:262px;width:50px">0</div><div class="c r" style="left:605px;top:262px;width:50px">2</div><div class="c r" style="left:655px;top:262px;width:50px">3</div><div class="c r" style="left:705px;top:262px;width:50px">0</div><div class="c r" style="left:755px;top:262px;width:50px"></div><div class="rn" style="top:282px">14</div><div class="c" style="left:35px;top:282px;width:120px"><span class="m">the</span><span class="j k" style="transform:scaleX(0.82);margin-right:-9.4px">おざいち</span></div><div class="c" style="left:155px;top:282px;width:120px">hozit</div><div class="c r" style="left:275px;top:282px;width:60px">15.58</div><div class="c r" style="left:335px;top:282px;width:60px">67.739</div><div class="c r" style="left:395px;top:282px;width:50px">0.03</div><div class="c r" style="left:445px;top:282px;width:60px">0.23</div><div class="c r" style="left:505px;top:282px;width:50px">0</div><div class="c r" style="left:555px;top:282px;width:50px">0</div><div class="c r" style="left:605px;top:282px;width:50px">2</div><div class="c r" style="left:655px;top:282px;width:50px">2</div><div class="c r" style="left:705px;top:282px;width:50px">0</div><div class="c r" style="left:755px;top:282px;width:50px"></div><div class="rn" style="top:302px">15</div><div class="c" style="left:35px;top:302px;width:120px"><span class="m">N</span><span class="j">持</span><span class="j k" style="transform:scaleX(0.82);margin-right:-2.3px">ち</span><span class="j">込</span><span class="j k" style="transform:scaleX(0.82);margin-right:-2.3px">み</span></div><div class="c" style="left:155px;top:302px;width:120px">mtkmN</div><div class="c r" style="left:275px;top:302px;width:60px">48.44</div><div class="c r" style="left:335px;top:302px;width:60px">302.75</div><div class="c r" style="left:395px;top:302px;width:50px">0.01</div><div class="c r" style="left:445px;top:302px;width:60px">0.16</div><div class="c r" style="left:505px;top:302px;width:50px">0</div><div class="c r" style="left:555px;top:302px;width:50px">0</div><div class="c r" style="left:605px;top:302px;width:50px">2</div><div class="c r" style="left:655px;top:302px;width:50px">2</div><div class="c r" style="left:705px;top:302px;width:50px">0</div><div class="c r" style="left:755px;top:302px;width:50px"></div><div class="rn" style="top:322px">16</div><div class="c" style="left:35px;top:322px;width:120px"><span class="j">守護角</span></div><div class="c" style="left:155px;top:322px;width:120px">kksyg</div><div class="c r" style="left:275px;top:322px;width:60px">870.66</div><div class="c r" style="left:335px;top:322px;width:60px">5121.529</div><div class="c r" style="left:395px;top:322px;width:50px">0</div><div class="c r" style="left:445px;top:322px;width:60px">0.17</div><div class="c r" style="left:505px;top:322px;width:50px">0</div><div class="c r" style="left:555px;top:322px;width:50px">0</div><div class="c r" style="left:605px;top:322px;width:50px">2</div><div class="c r" style="left:655px;top:322px;width:50px">1</div><div class="c r" style="left:705px;top:322px;width:50px">0</div><div class="c r" style="left:755px;top:322px;width:50px"></div><div class="rn" style="top:342px">17</div><div class="c" style="left:35px;top:342px;width:120px"><span class="j">誕生日</span></div><div class="c" style="left:155px;top:342px;width:120px">tnjyb</div><div class="c r" style="left:275px;top:342px;width:60px">24.1</div><div class="c r" style="left:335px;top:342px;width:60px">219.09</div><div class="c r" style="left:395px;top:342px;width:50px">0.03</div><div class="c r" style="left:445px;top:342px;width:60px">0.11</div><div class="c r" style="left:505px;top:342px;width:50px">0</div><div class="c r" style="left:555px;top:342px;width:50px">0</div><div class="c r" style="left:605px;top:342px;width:50px">2</div><div class="c r" style="left:655px;top:342px;width:50px">1</div><div class="c r" style="left:705px;top:342px;width:50px">0</div><div class="c r" style="left:755px;top:342px;width:50px"></div><div class="rn" style="top:362px">18</div><div class="c" style="left:35px;top:362px;width:120px"><span class="fw" style="width:9px">3</span><span class="fw" style="width:9px">1</span><span class="fw" style="width:9px">5</span><span class="j">釣</span><span class="j k" style="transform:scaleX(0.82);margin-right:-2.3px">り</span></div><div class="c" style="left:155px;top:362px;width:120px">gyhtr</div><div class="c r" style="left:275px;top:362px;width:60px">30.77</div><div class="c r" style="left:335px;top:362px;width:60px">9.585</div><div class="c r" style="left:395px;top:362px;width:50px">0.04</div><div class="c r" style="left:445px;top:362px;width:60px">3.21</div><div class="c r" style="left:505px;top:362px;width:50px">0</div><div class="c r" style="left:555px;top:362px;width:50px">0</div><div class="c r" style="left:605px;top:362px;width:50px">2</div><div class="c r" style="left:655px;top:362px;width:50px">0</div><div class="c r" style="left:705px;top:362px;width:50px">0</div><div class="c r" style="left:755px;top:362px;width:50px"></div><div class="rn" style="top:382px">19</div><div class="c" style="left:35px;top:382px;width:120px"><span class="j">低周波</span></div><div class="c" style="left:155px;top:382px;width:120px">tisyh</div><div class="c r" style="left:275px;top:382px;width:60px">21.6</div><div class="c r" style="left:335px;top:382px;width:60px">308.571</div><div class="c r" style="left:395px;top:382px;width:50px">0.03</div><div class="c r" style="left:445px;top:382px;width:60px">0.07</div><div class="c r" style="left:505px;top:382px;width:50px">0</div><div class="c r" style="left:555px;top:382px;width:50px">0</div><div class="c r" style="left:605px;top:382px;width:50px">2</div><div class="c r" style="left:655px;top:382px;width:50px">0</div><div class="c r" style="left:705px;top:382px;width:50px">0</div><div class="c r" style="left:755px;top:382px;width:50px"></div><div class="rn" style="top:402px">20</div><div class="c" style="left:35px;top:402px;width:120px"></div><div class="c" style="left:155px;top:402px;width:120px"></div><div class="c r" style="left:275px;top:402px;width:60px"></div><div class="c r" style="left:335px;top:402px;width:60px"></div><div class="c r" style="left:395px;top:402px;width:50px"></div><div class="c r" style="left:445px;top:402px;width:60px"></div><div class="c r" style="left:505px;top:402px;width:50px"></div><div class="c r" style="left:555px;top:402px;width:50px"></div><div class="c r" style="left:605px;top:402px;width:50px"></div><div class="c r" style="left:655px;top:402px;width:50px"></div><div class="c r" style="left:705px;top:402px;width:50px"></div><div class="c r" style="left:755px;top:402px;width:50px"></div><div style="position:absolute;left:39px;top:404px;width:1px;height:1px;background:#000"></div><div style="position:absolute;left:45px;top:404px;width:1px;height:1px;background:#000"></div><div style="position:absolute;left:55px;top:404px;width:1px;height:1px;background:#000"></div><div style="position:absolute;left:58px;top:404px;width:1px;height:1px;background:#000"></div><div class="hsb" style="width:796px"><svg class="arr" width="17" height="16"><path d="M10.5 4 L6.5 7.5 L10.5 11" fill="none" stroke="#606060" stroke-width="2"/></svg><div class="thumb" style="width:698px"></div></div></div><div class="cbtn" style="left:1251px;top:139px"><svg class="ic" style="left:9px;top:7px" width="11" height="5"><rect x="0.5" y="0.5" width="10" height="4" rx="1.6" fill="#efefef" stroke="#383838"/></svg></div><div style="position:absolute;left:1263px;top:172px;width:6px;height:21px;border:1px solid #8a8a8a;background:#f4f4f4;border-radius:2px"></div><div class="vsb"></div><div class="vth"></div><svg class="up" width="16" height="16"><path d="M4.5 10.5 L8 6 L11.5 10.5" fill="none" stroke="#606060" stroke-width="2"/></svg></body></html>
